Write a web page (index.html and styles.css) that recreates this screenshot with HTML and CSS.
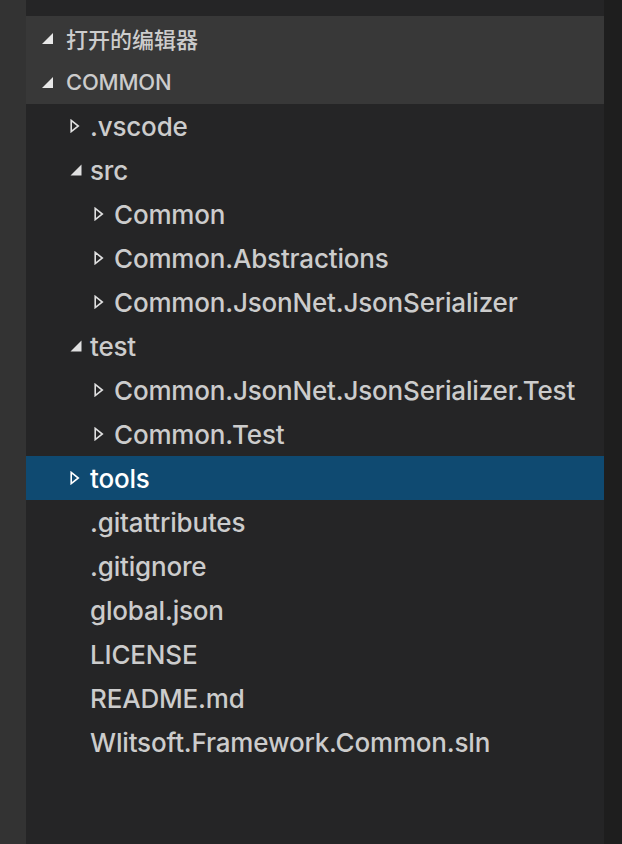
FILE: index.html
```html
<!DOCTYPE html>
<html>
<head>
<meta charset="utf-8">
<link rel="stylesheet" href="styles.css">
</head>
<body>
<div class="app">
  <div class="activity"></div>
  <div class="sidebar">
    <div class="topgap"></div>
    <div class="header"><span class="hdr-arrow"><svg width="13" height="13" viewBox="0 0 13 13"><path d="M12 1 L12 12 L1 12 Z" fill="#e8e8e8"/></svg></span><span class="hdr-text cjk">打开的编辑器</span></div>
    <div class="header"><span class="hdr-arrow"><svg width="13" height="13" viewBox="0 0 13 13"><path d="M12 1 L12 12 L1 12 Z" fill="#e8e8e8"/></svg></span><span class="hdr-text">COMMON</span></div>
    <div class="tree">
      <div class="row l0"><span class="arrow"><svg width="10" height="14" viewBox="0 0 10 14"><path d="M1.2 1.4 L8.3 7 L1.2 12.6 Z" fill="none" stroke="#e0e0e0" stroke-width="1.6"/></svg></span><span class="name">.vscode</span></div>
      <div class="row l0"><span class="arrow"><svg width="12" height="12" viewBox="0 0 12 12"><path d="M11.5 0.5 L11.5 11.5 L0.5 11.5 Z" fill="#e0e0e0"/></svg></span><span class="name">src</span></div>
      <div class="row l1"><span class="arrow"><svg width="10" height="14" viewBox="0 0 10 14"><path d="M1.2 1.4 L8.3 7 L1.2 12.6 Z" fill="none" stroke="#e0e0e0" stroke-width="1.6"/></svg></span><span class="name">Common</span></div>
      <div class="row l1"><span class="arrow"><svg width="10" height="14" viewBox="0 0 10 14"><path d="M1.2 1.4 L8.3 7 L1.2 12.6 Z" fill="none" stroke="#e0e0e0" stroke-width="1.6"/></svg></span><span class="name">Common.Abstractions</span></div>
      <div class="row l1"><span class="arrow"><svg width="10" height="14" viewBox="0 0 10 14"><path d="M1.2 1.4 L8.3 7 L1.2 12.6 Z" fill="none" stroke="#e0e0e0" stroke-width="1.6"/></svg></span><span class="name">Common.JsonNet.JsonSerializer</span></div>
      <div class="row l0"><span class="arrow"><svg width="12" height="12" viewBox="0 0 12 12"><path d="M11.5 0.5 L11.5 11.5 L0.5 11.5 Z" fill="#e0e0e0"/></svg></span><span class="name">test</span></div>
      <div class="row l1"><span class="arrow"><svg width="10" height="14" viewBox="0 0 10 14"><path d="M1.2 1.4 L8.3 7 L1.2 12.6 Z" fill="none" stroke="#e0e0e0" stroke-width="1.6"/></svg></span><span class="name">Common.JsonNet.JsonSerializer.Test</span></div>
      <div class="row l1"><span class="arrow"><svg width="10" height="14" viewBox="0 0 10 14"><path d="M1.2 1.4 L8.3 7 L1.2 12.6 Z" fill="none" stroke="#e0e0e0" stroke-width="1.6"/></svg></span><span class="name">Common.Test</span></div>
      <div class="row l0 selected"><span class="arrow"><svg width="10" height="14" viewBox="0 0 10 14"><path d="M1.2 1.4 L8.3 7 L1.2 12.6 Z" fill="none" stroke="#ffffff" stroke-width="1.6"/></svg></span><span class="name">tools</span></div>
      <div class="row l0"><span class="arrow"></span><span class="name">.gitattributes</span></div>
      <div class="row l0"><span class="arrow"></span><span class="name">.gitignore</span></div>
      <div class="row l0"><span class="arrow"></span><span class="name">global.json</span></div>
      <div class="row l0"><span class="arrow"></span><span class="name">LICENSE</span></div>
      <div class="row l0"><span class="arrow"></span><span class="name">README.md</span></div>
      <div class="row l0"><span class="arrow"></span><span class="name">Wlitsoft.Framework.Common.sln</span></div>
    </div>
  </div>
  <div class="scroll"></div>
</div>
</body>
</html>
```

FILE: styles.css
```css
html, body {
  margin: 0;
  padding: 0;
  height: 100%;
  background: #252526;
}
.app {
  display: flex;
  height: 844px;
  font-family: Inter, "Noto Sans CJK SC", sans-serif;
}
.activity {
  width: 26px;
  background: #333333;
  flex: none;
}
.sidebar {
  width: 578px;
  flex: none;
  background: #252526;
  display: flex;
  flex-direction: column;
}
.scroll {
  flex: 1;
  background: #1e1e1e;
}
.topgap {
  height: 16px;
}
.header {
  height: 44px;
  background: #383838;
  display: flex;
  align-items: center;
  color: #cccccc;
  font-size: 22px;
  font-weight: 500;
}
.hdr-arrow {
  padding-left: 15px;
  box-sizing: border-box;
  width: 40px;
  flex: none;
  display: flex;
  align-items: center;
}
.hdr-text {
  letter-spacing: -0.2px;
}
.hdr-text.cjk {
  font-family: "Noto Sans CJK SC", sans-serif;
  font-weight: 500;
  letter-spacing: 0;
}
.tree {
  display: flex;
  flex-direction: column;
}
.row {
  height: 44px;
  display: flex;
  align-items: center;
  color: #cccccc;
  font-size: 26px;
  font-weight: 500;
  letter-spacing: -0.18px;
}
.row .arrow {
  width: 20px;
  flex: none;
  display: flex;
  align-items: center;
}
.row.l0 { padding-left: 44px; }
.row.l1 { padding-left: 68px; }
.row.selected {
  background: #0f4a71;
  color: #ffffff;
}
.name {
  white-space: nowrap;
}
```
